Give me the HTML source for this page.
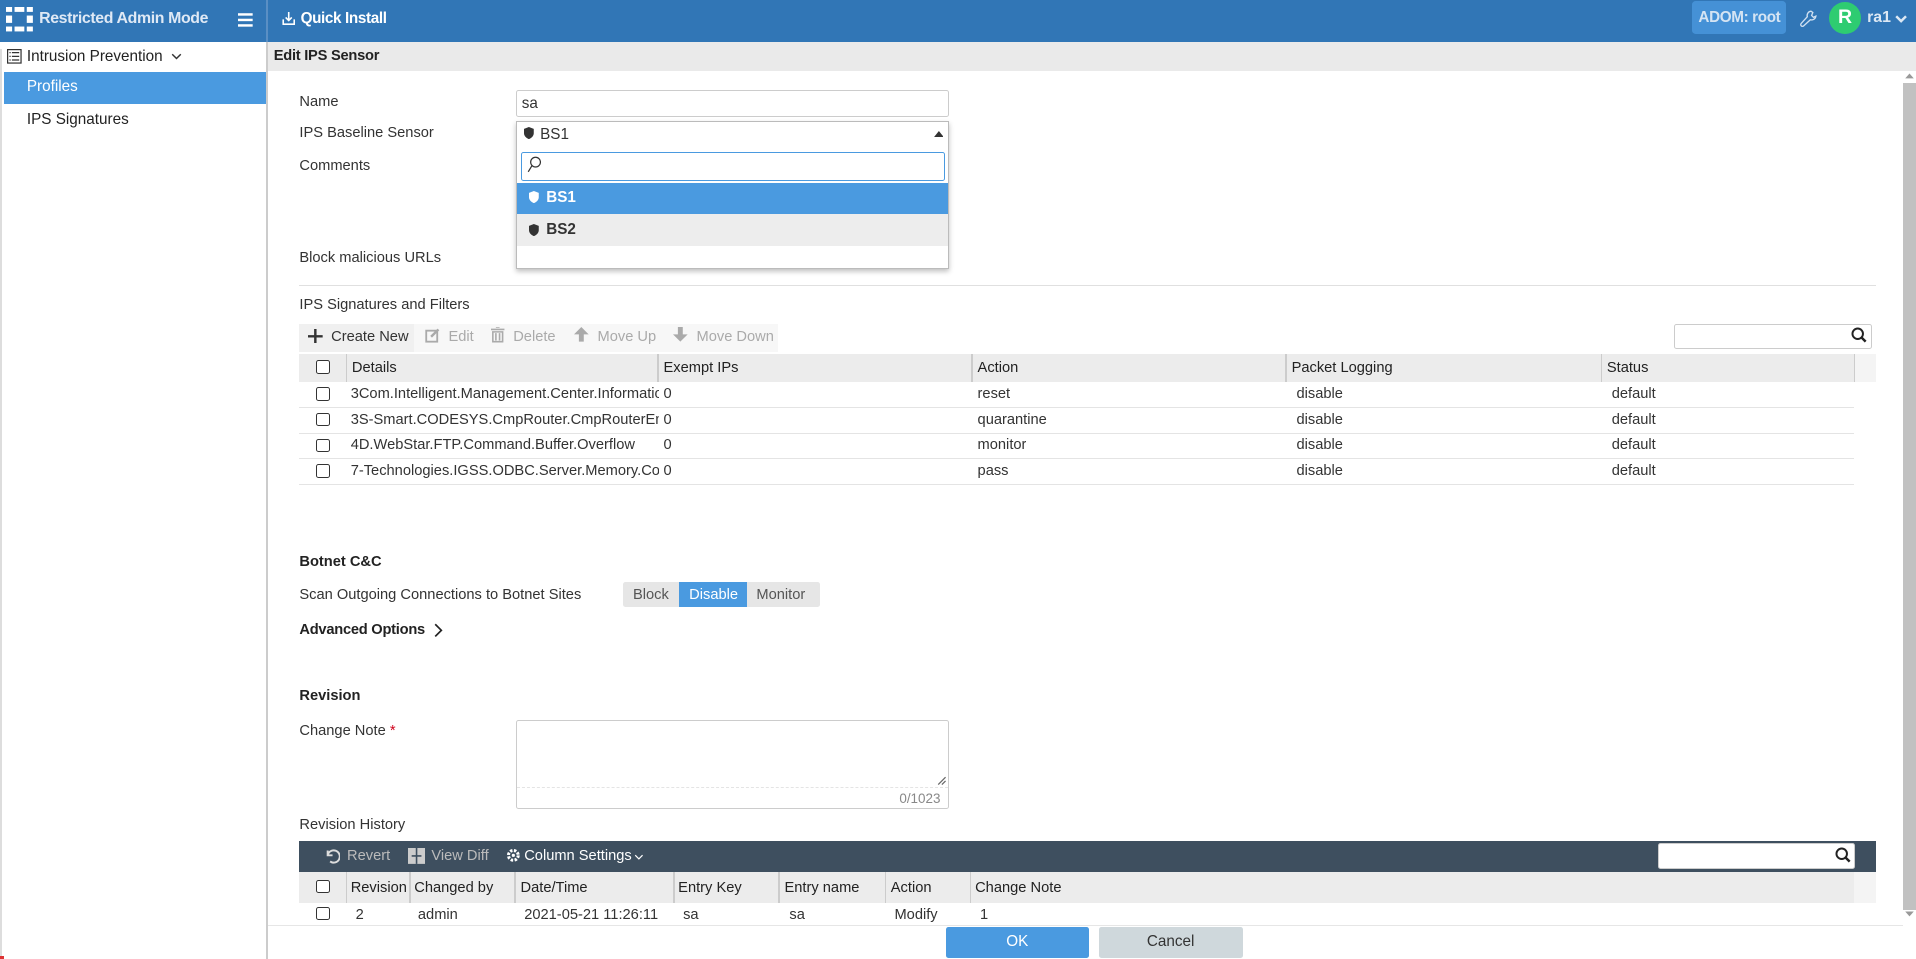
<!DOCTYPE html>
<html><head><meta charset="utf-8"><style>
html{zoom:1.22194}
*{box-sizing:border-box;margin:0;padding:0}
body{width:1568px;height:785px;overflow:hidden;font-family:"Liberation Sans",sans-serif;font-size:12px;color:#333;background:#fff;position:relative}
.a{position:absolute}
.hdr{left:0;top:0;width:1568px;height:34px;background:#3176b6}
.w{color:#fff}
.lbl{position:absolute;left:245px;font-size:12px;color:#333}
.inp{position:absolute;border:1px solid #ccc;border-radius:2px;background:#fff}
.cb{position:absolute;width:11px;height:11px;border:1.6px solid #333;border-radius:2px;background:#fff}
.th{position:absolute;font-size:12px;color:#222}
.td{position:absolute;font-size:12px;color:#333;white-space:nowrap;overflow:hidden}
.vl{position:absolute;width:1px;background:#ccc}
.hl{position:absolute;height:1px;background:#e4e4e4}
.tool{position:absolute;font-size:12px;color:#aaa}
</style></head><body>
<div class="a hdr"></div>
<div class="a" style="left:218px;top:0;width:1px;height:34px;background:#5a8fc4"></div>
<svg class="a" style="left:5px;top:6px" width="22" height="20" viewBox="0 0 22 20"><g fill="#fff"><rect x="0" y="0" width="5" height="4"/><rect x="7" y="0" width="8" height="4"/><rect x="17" y="0" width="5" height="4"/><rect x="0" y="7" width="5" height="6"/><rect x="7" y="7" width="8" height="6" fill="#fff" opacity="0.0"/><rect x="17" y="7" width="5" height="6"/><rect x="0" y="16" width="5" height="4"/><rect x="7" y="16" width="8" height="4"/><rect x="17" y="16" width="5" height="4"/></g></svg>
<div class="a w" style="left:32px;top:8px;font-size:13px;font-weight:bold;letter-spacing:-0.3px;color:#dfe9f5">Restricted Admin Mode</div>
<svg class="a" style="left:195px;top:10px" width="12" height="13"><g fill="#fff"><rect y="1" width="12" height="2"/><rect y="5.5" width="12" height="2"/><rect y="10" width="12" height="2"/></g></svg>
<svg class="a" style="left:231px;top:10px" width="11" height="11" viewBox="0 0 11 11"><path d="M5.5 0v7M3 4.5l2.5 2.5 2.5-2.5M1 6v4h9V6" stroke="#fff" stroke-width="1.3" fill="none"/></svg>
<div class="a w" style="left:246px;top:8px;font-size:12.5px;font-weight:bold;letter-spacing:-0.3px">Quick Install</div>
<div class="a" style="left:1385px;top:1px;width:77px;height:27px;background:#4591d6;border-radius:3px;color:#d5e4f3;font-weight:bold;font-size:12.5px;line-height:27px;text-align:center;letter-spacing:-0.3px">ADOM: root</div>
<svg class="a" style="left:1473px;top:8px" width="14" height="15" viewBox="0 0 14 15"><path d="M9 1a3.5 3.5 0 0 0-3 4.5L1 11a1.4 1.4 0 0 0 2 2l5.5-5a3.5 3.5 0 0 0 4.5-3l-2 1-1.5-1.5 1-2.5z" fill="none" stroke="#cfe0f1" stroke-width="1.1"/></svg>
<div class="a" style="left:1497px;top:2px;width:26px;height:26px;border-radius:50%;background:#2ecc71;color:#fff;font-weight:bold;font-size:16px;line-height:26px;text-align:center">R</div>
<div class="a" style="left:1528px;top:7px;font-size:13px;font-weight:bold;color:#dce8f4">ra1</div>
<svg class="a" style="left:1551px;top:12px" width="10" height="7"><path d="M1 1l4 4 4-4" stroke="#dce8f4" stroke-width="2" fill="none"/></svg>

<div class="a" style="left:218px;top:34px;width:1px;height:751px;background:#ccc"></div>
<div class="a" style="left:0;top:40px;width:2px;height:745px;background:#ddd"></div>
<svg class="a" style="left:6px;top:40px" width="12" height="12" viewBox="0 0 12 12"><rect x=".5" y=".5" width="11" height="11" fill="none" stroke="#333"/><g stroke="#333"><path d="M2 3h1M4 3h6M2 6h1M4 6h6M2 9h1M4 9h6"/></g></svg>
<div class="a" style="left:22px;top:39px;font-size:12.5px;color:#222">Intrusion Prevention</div>
<svg class="a" style="left:140px;top:43px" width="9" height="6"><path d="M1 1l3.5 3.5L8 1" stroke="#333" stroke-width="1.2" fill="none"/></svg>
<div class="a" style="left:3px;top:59px;width:215px;height:26px;background:#4a9ae0"></div>
<div class="a" style="left:22px;top:64px;color:#fff;font-size:12.5px">Profiles</div>
<div class="a" style="left:22px;top:91px;font-size:12.5px;color:#222">IPS Signatures</div>

<div class="a" style="left:219px;top:34px;width:1349px;height:24px;background:#eaeaea"></div>
<div class="a" style="left:224px;top:39px;font-size:12px;font-weight:bold;color:#222;letter-spacing:-0.2px">Edit IPS Sensor</div>
<div class="a" style="left:1557px;top:68px;width:11px;height:677px;background:#c1c1c1"></div>
<svg class="a" style="left:1558px;top:58px" width="9" height="8"><path d="M1 6l3.5-4L8 6z" fill="#999"/></svg>
<svg class="a" style="left:1558px;top:744px" width="9" height="8"><path d="M1 2l3.5 4L8 2z" fill="#999"/></svg>

<div class="lbl" style="top:77px">Name</div>
<div class="inp" style="left:422px;top:74px;width:355px;height:22px"></div>
<div class="a" style="left:427px;top:78px;font-size:12.5px">sa</div>
<div class="lbl" style="top:102px">IPS Baseline Sensor</div>
<div class="lbl" style="top:129px">Comments</div>
<div class="lbl" style="top:205px">Block malicious URLs</div>
<div class="a" style="left:432px;top:214px;width:42px;height:6px;background:#ddd;border-radius:3px"></div>

<div class="a" style="left:422px;top:99px;width:355px;height:121px;background:#fff;border:1px solid #bbb;box-shadow:0 2px 4px rgba(0,0,0,.25)"></div>
<svg class="a" style="left:429px;top:104px" width="8" height="10" viewBox="0 0 8 10"><path d="M4 0L0 1.5V5c0 2.5 2 4 4 5 2-1 4-2.5 4-5V1.5z" fill="#333"/></svg>
<div class="a" style="left:442px;top:103px;font-size:12.5px">BS1</div>
<svg class="a" style="left:764px;top:107px" width="8" height="5"><path d="M0 5L4 0l4 5z" fill="#333"/></svg>
<div class="a" style="left:426px;top:124px;width:347px;height:24px;border:1px solid #4a9ae0;border-radius:2px;background:#fff"></div>
<svg class="a" style="left:431px;top:128px" width="12" height="14" viewBox="0 0 12 14"><circle cx="7" cy="5" r="4" fill="none" stroke="#333"/><path d="M4 8l-3 5" stroke="#333"/><path d="M12 2v11" stroke="#333"/></svg>
<div class="a" style="left:423px;top:150px;width:353px;height:25px;background:#4a9ae0"></div>
<svg class="a" style="left:433px;top:156px" width="8" height="10" viewBox="0 0 8 10"><path d="M4 0L0 1.5V5c0 2.5 2 4 4 5 2-1 4-2.5 4-5V1.5z" fill="#fff"/></svg>
<div class="a" style="left:447px;top:155px;font-size:12.5px;font-weight:bold;color:#fff">BS1</div>
<div class="a" style="left:423px;top:175px;width:353px;height:26px;background:#ededed"></div>
<svg class="a" style="left:433px;top:183px" width="8" height="10" viewBox="0 0 8 10"><path d="M4 0L0 1.5V5c0 2.5 2 4 4 5 2-1 4-2.5 4-5V1.5z" fill="#333"/></svg>
<div class="a" style="left:447px;top:181px;font-size:12.5px;font-weight:bold;color:#333">BS2</div>

<div class="a" style="left:245px;top:233px;width:1290px;height:1px;background:#e0e0e0"></div>
<div class="lbl" style="top:243px">IPS Signatures and Filters</div>

<div class="a" style="left:245px;top:265px;width:392px;height:23px;background:#f7f7f7"></div>
<div class="a" style="left:245px;top:265px;width:94px;height:23px;background:#f0f0f0"></div>
<svg class="a" style="left:252px;top:269px" width="12" height="12"><path d="M6 0v12M0 6h12" stroke="#333" stroke-width="2"/></svg>
<div class="a" style="left:271px;top:269px;font-size:12px;color:#333">Create New</div>
<svg class="a" style="left:348px;top:268px" width="13" height="13"><rect x="1" y="3" width="9" height="9" fill="none" stroke="#aaa" stroke-width="1.5"/><path d="M5 8l6-6" stroke="#aaa" stroke-width="2"/></svg>
<div class="tool" style="left:367px;top:269px">Edit</div>
<svg class="a" style="left:402px;top:268px" width="11" height="13"><path d="M0 2h11M4 0h3M1.5 4h8v8h-8zM4 5v6M7 5v6" stroke="#aaa" fill="none" stroke-width="1.3"/></svg>
<div class="tool" style="left:420px;top:269px">Delete</div>
<svg class="a" style="left:470px;top:268px" width="12" height="12"><path d="M6 0L0 6h4v6h4V6h4z" fill="#aaa"/></svg>
<div class="tool" style="left:489px;top:269px">Move Up</div>
<svg class="a" style="left:551px;top:268px" width="12" height="12"><path d="M6 12L0 6h4V0h4v6h4z" fill="#aaa"/></svg>
<div class="tool" style="left:570px;top:269px">Move Down</div>
<div class="inp" style="left:1370px;top:265px;width:162px;height:21px"></div>
<svg class="a" style="left:1515px;top:268px" width="13" height="13"><circle cx="5.5" cy="5.5" r="4.3" fill="none" stroke="#222" stroke-width="1.6"/><path d="M8.5 8.5l3.5 3.5" stroke="#222" stroke-width="2"/></svg>

<div class="a" style="left:245px;top:290px;width:1272px;height:23px;background:#ececec"></div>
<div class="a" style="left:1517px;top:290px;width:18px;height:23px;background:#f4f4f4"></div>
<div class="cb" style="left:259px;top:295px"></div>
<div class="vl" style="left:283px;top:290px;height:23px"></div>
<div class="vl" style="left:538px;top:290px;height:23px"></div>
<div class="vl" style="left:795px;top:290px;height:23px"></div>
<div class="vl" style="left:1052px;top:290px;height:23px"></div>
<div class="vl" style="left:1310px;top:290px;height:23px"></div>
<div class="vl" style="left:1517px;top:290px;height:23px"></div>
<div class="th" style="left:288px;top:295px">Details</div>
<div class="th" style="left:543px;top:295px">Exempt IPs</div>
<div class="th" style="left:800px;top:295px">Action</div>
<div class="th" style="left:1057px;top:295px">Packet Logging</div>
<div class="th" style="left:1315px;top:295px">Status</div>

<div class="cb" style="left:259px;top:317px"></div><div class="td" style="left:287px;top:316px;width:252px">3Com.Intelligent.Management.Center.Information</div><div class="td" style="left:543px;top:316px">0</div><div class="td" style="left:800px;top:316px">reset</div><div class="td" style="left:1061px;top:316px">disable</div><div class="td" style="left:1319px;top:316px">default</div>
<div class="hl" style="left:245px;top:333px;width:1272px"></div>
<div class="cb" style="left:259px;top:338px"></div><div class="td" style="left:287px;top:337px;width:252px">3S-Smart.CODESYS.CmpRouter.CmpRouterEmbedded</div><div class="td" style="left:543px;top:337px">0</div><div class="td" style="left:800px;top:337px">quarantine</div><div class="td" style="left:1061px;top:337px">disable</div><div class="td" style="left:1319px;top:337px">default</div>
<div class="hl" style="left:245px;top:354px;width:1272px"></div>
<div class="cb" style="left:259px;top:359px"></div><div class="td" style="left:287px;top:358px;width:252px">4D.WebStar.FTP.Command.Buffer.Overflow</div><div class="td" style="left:543px;top:358px">0</div><div class="td" style="left:800px;top:358px">monitor</div><div class="td" style="left:1061px;top:358px">disable</div><div class="td" style="left:1319px;top:358px">default</div>
<div class="hl" style="left:245px;top:375px;width:1272px"></div>
<div class="cb" style="left:259px;top:380px"></div><div class="td" style="left:287px;top:379px;width:252px">7-Technologies.IGSS.ODBC.Server.Memory.Corruption</div><div class="td" style="left:543px;top:379px">0</div><div class="td" style="left:800px;top:379px">pass</div><div class="td" style="left:1061px;top:379px">disable</div><div class="td" style="left:1319px;top:379px">default</div>
<div class="hl" style="left:245px;top:396px;width:1272px"></div>

<div class="a" style="left:245px;top:453px;font-weight:bold;font-size:12px;color:#222">Botnet C&amp;C</div>
<div class="lbl" style="top:480px">Scan Outgoing Connections to Botnet Sites</div>
<div class="a" style="left:510px;top:476px;width:161px;height:21px;background:#e6e6e6;border-radius:2px"></div>
<div class="a" style="left:556px;top:476px;width:55px;height:21px;background:#4a9ae0"></div>
<div class="a" style="left:518px;top:480px;color:#555">Block</div>
<div class="a" style="left:564px;top:480px;color:#fff">Disable</div>
<div class="a" style="left:619px;top:480px;color:#555">Monitor</div>
<div class="a" style="left:245px;top:509px;font-weight:bold;font-size:12px;color:#222;letter-spacing:-0.2px">Advanced Options</div>
<svg class="a" style="left:355px;top:510px" width="8" height="12"><path d="M1 1l5 5-5 5" stroke="#222" stroke-width="1.4" fill="none"/></svg>

<div class="a" style="left:245px;top:563px;font-weight:bold;font-size:12px;color:#222">Revision</div>
<div class="lbl" style="top:592px">Change Note <span style="color:#d0021b">*</span></div>
<div class="inp" style="left:422px;top:589px;width:355px;height:73px"></div>
<div class="a" style="left:423px;top:644px;width:353px;border-top:1px dashed #e4e4e4"></div>
<div class="a" style="left:736px;top:647px;font-size:11px;color:#888">0/1023</div>
<svg class="a" style="left:767px;top:635px" width="8" height="8"><path d="M7 1L1 7M7 4L4 7" stroke="#666"/></svg>
<div class="lbl" style="top:669px">Revision History</div>

<div class="a" style="left:245px;top:688px;width:1290px;height:26px;background:#3e4f5f"></div>
<svg class="a" style="left:265px;top:694px" width="13" height="13"><path d="M3 2v4h4M3 6a5 5 0 1 1 2 5" stroke="#ddd" stroke-width="1.6" fill="none"/></svg>
<div class="a" style="left:284px;top:694px;color:#bbb">Revert</div>
<svg class="a" style="left:334px;top:694px" width="14" height="13"><rect x="0" y="0" width="14" height="13" fill="#ccc"/><path d="M7 0v13M3 6.5h8" stroke="#3e4f5f" stroke-width="1.3"/></svg>
<div class="a" style="left:353px;top:694px;color:#bbb">View Diff</div>
<svg class="a" style="left:414px;top:694px" width="12" height="12"><circle cx="6" cy="6" r="4" fill="none" stroke="#fff" stroke-width="2.5" stroke-dasharray="2 1.2"/><circle cx="6" cy="6" r="1.3" fill="#fff"/></svg>
<div class="a" style="left:429px;top:694px;color:#fff">Column Settings</div>
<svg class="a" style="left:519px;top:699px" width="8" height="5"><path d="M1 1l3 3 3-3" stroke="#fff" fill="none"/></svg>
<div class="inp" style="left:1357px;top:690px;width:161px;height:21px"></div>
<svg class="a" style="left:1502px;top:693px" width="13" height="13"><circle cx="5.5" cy="5.5" r="4.3" fill="none" stroke="#222" stroke-width="1.6"/><path d="M8.5 8.5l3.5 3.5" stroke="#222" stroke-width="2"/></svg>

<div class="a" style="left:245px;top:714px;width:1272px;height:25px;background:#ececec"></div>
<div class="a" style="left:1517px;top:714px;width:18px;height:25px;background:#f4f4f4"></div>
<div class="cb" style="left:259px;top:720px"></div>
<div class="vl" style="left:283px;top:714px;height:25px"></div>
<div class="vl" style="left:335px;top:714px;height:25px"></div>
<div class="vl" style="left:421px;top:714px;height:25px"></div>
<div class="vl" style="left:551px;top:714px;height:25px"></div>
<div class="vl" style="left:637px;top:714px;height:25px"></div>
<div class="vl" style="left:724px;top:714px;height:25px"></div>
<div class="vl" style="left:794px;top:714px;height:25px"></div>
<div class="th" style="left:287px;top:720px">Revision</div>
<div class="th" style="left:339px;top:720px">Changed by</div>
<div class="th" style="left:426px;top:720px">Date/Time</div>
<div class="th" style="left:555px;top:720px">Entry Key</div>
<div class="th" style="left:642px;top:720px">Entry name</div>
<div class="th" style="left:729px;top:720px">Action</div>
<div class="th" style="left:798px;top:720px">Change Note</div>
<div class="cb" style="left:259px;top:742px"></div>
<div class="td" style="left:291px;top:742px">2</div>
<div class="td" style="left:342px;top:742px">admin</div>
<div class="td" style="left:429px;top:742px">2021-05-21 11:26:11</div>
<div class="td" style="left:559px;top:742px">sa</div>
<div class="td" style="left:646px;top:742px">sa</div>
<div class="td" style="left:732px;top:742px">Modify</div>
<div class="td" style="left:802px;top:742px">1</div>

<div class="a" style="left:219px;top:757px;width:1338px;height:28px;background:#fff;border-top:1px solid #e6e6e6"></div>
<div class="a" style="left:774px;top:759px;width:117px;height:25px;background:#4a9ae0;border-radius:2px;color:#fff;font-size:12.5px;line-height:25px;text-align:center">OK</div>
<div class="a" style="left:899px;top:759px;width:118px;height:25px;background:#cfd8dc;border-radius:2px;color:#333;font-size:12.5px;line-height:25px;text-align:center">Cancel</div>
<div class="a" style="left:0;top:782px;width:3px;height:3px;background:#d33"></div>
</body></html>
